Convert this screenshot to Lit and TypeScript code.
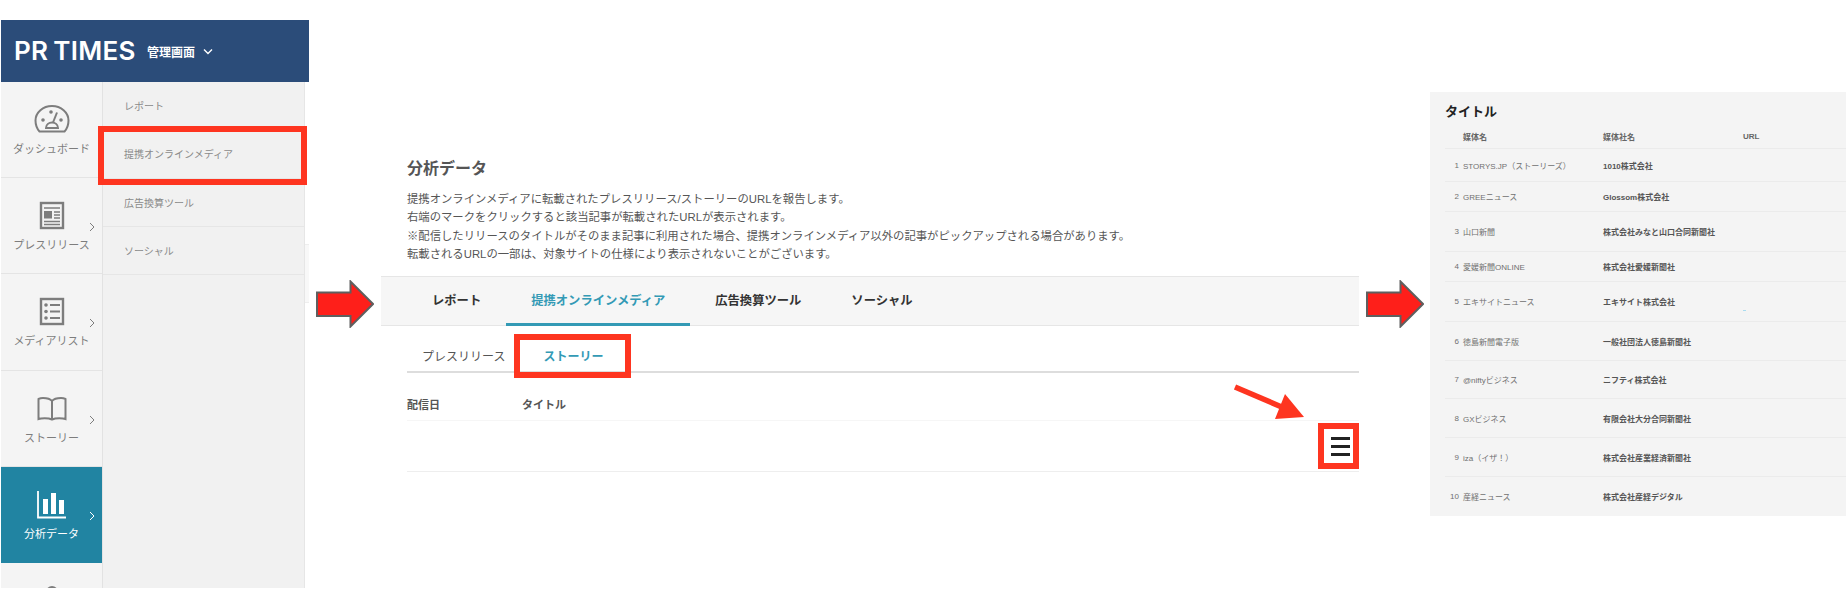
import { LitElement, html, css, svg } from "lit";
import { customElement } from "lit/decorators.js";

const ICONS = {
  gauge: svg`<path d="M5.5 27.5C2.8 24.5 1.5 20.500 1.500 16.500C1.500 8.500 9 2 18 2S34.500 8.500 34.500 16.500C34.500 20.500 33.200 24.500 30.500 27.500Z" fill="none" stroke="currentColor" stroke-width="2"/>
    <circle cx="9" cy="16" r="1.800" fill="currentColor"/><circle cx="27" cy="16" r="1.800" fill="currentColor"/><circle cx="17" cy="8" r="1.800" fill="currentColor"/>
    <path d="M23 8.500L19 18.500" stroke="currentColor" stroke-width="2"/>
    <path d="M12 24C12 20.500 15 18.500 18 18.500S24 20.500 24 24Z" fill="none" stroke="currentColor" stroke-width="2"/>`,
  news: svg`<rect x="7" y="3" width="22" height="25" fill="none" stroke="currentColor" stroke-width="2.400"/>
    <path d="M10 8H26M20 12H26M20 15H26M20 18H26M10 21.500H26M10 24.500H26" stroke="currentColor" stroke-width="1.600"/>
    <rect x="10" y="11" width="8" height="7.500" fill="currentColor"/>`,
  list: svg`<rect x="7" y="3" width="22" height="25" fill="none" stroke="currentColor" stroke-width="2.400"/>
    <circle cx="12" cy="9" r="1.800" fill="currentColor"/><circle cx="12" cy="15.500" r="1.800" fill="currentColor"/><circle cx="12" cy="22" r="1.800" fill="currentColor"/>
    <path d="M16 9H26M16 15.500H26M16 22H26" stroke="currentColor" stroke-width="1.800"/>`,
  book: svg`<path d="M18 8C16 5.500 12 5 9 5C7 5 5.500 5.500 4.500 6V26C7 25 14 24.500 18 26.500C22 24.500 29 25 31.500 26V6C30.500 5.500 29 5 27 5C24 5 20 5.500 18 8ZM18 8V26" fill="none" stroke="currentColor" stroke-width="2"/>`,
  bars: svg`<path d="M4 2V28.500H32" fill="none" stroke="currentColor" stroke-width="1.800"/>
    <rect x="9" y="10" width="5" height="15" fill="currentColor"/><rect x="17" y="4" width="5" height="21" fill="currentColor"/><rect x="25" y="11" width="5" height="14" fill="currentColor"/>`,
  user: svg`<circle cx="18" cy="7" r="5" fill="none" stroke="currentColor" stroke-width="2"/>`,
};

const NAV = [
  { label: "ダッシュボード", icon: ICONS.gauge },
  { label: "プレスリリース", icon: ICONS.news, arrow: true },
  { label: "メディアリスト", icon: ICONS.list, arrow: true },
  { label: "ストーリー", icon: ICONS.book, arrow: true },
  { label: "分析データ", icon: ICONS.bars, arrow: true, active: true },
  { label: "", icon: ICONS.user },
];

const MEDIA = [
  ["1", "STORYS.JP（ストーリーズ）", "1010株式会社", 33],
  ["2", "GREEニュース", "Glossom株式会社", 30],
  ["3", "山口新聞", "株式会社みなと山口合同新聞社", 40],
  ["4", "愛媛新聞ONLINE", "株式会社愛媛新聞社", 30],
  ["5", "エキサイトニュース", "エキサイト株式会社", 40],
  ["6", "徳島新聞電子版", "一般社団法人徳島新聞社", 39],
  ["7", "@niftyビジネス", "ニフティ株式会社", 38],
  ["8", "GXビジネス", "有限会社大分合同新聞社", 39],
  ["9", "iza（イザ！）", "株式会社産業経済新聞社", 39],
  ["10", "産経ニュース", "株式会社産経デジタル", 39],
];

@customElement("app-root")
export class AppRoot extends LitElement {
  static styles = css`
    :host {
      display: block;
      width: 1846px;
      height: 612px;
      overflow: hidden;
      background: #fff;
      font-family: "Liberation Sans", "Noto Sans CJK JP", sans-serif;
    }
    .page {
      display: flex;
      align-items: flex-start;
    }

    /* sidebar */
    .sidebar {
      flex: none;
      width: 308px;
      margin: 20px 0 0 1px;
    }
    .head {
      height: 62px;
      background: #2b4c79;
      color: #fff;
      display: flex;
      align-items: center;
      padding-left: 13px;
      box-sizing: border-box;
    }
    .logo {
      width: 133px;
      font-family: Inter, sans-serif;
      font-size: 26px;
      font-weight: 600;
      letter-spacing: 0.3px;
      word-spacing: -2px;
      line-height: 1;
      white-space: nowrap;
    }
    .head-label {
      font-size: 12px;
      font-weight: 700;
    }
    .head svg {
      margin-left: 8px;
    }
    .lower {
      display: flex;
    }
    .body {
      flex: none;
      display: flex;
      height: 506px;
      width: 303px;
      border-right: 1px solid #e6e6e6;
      background: #f1f1f1;
    }
    .peek {
      flex: 1;
      height: 57px;
      margin-top: 162px;
      background: #f8f8f8;
      border-top: 1px solid #eee;
      border-bottom: 1px solid #eee;
    }
    .nav {
      flex: none;
      width: 101px;
      height: 506px;
      overflow: hidden;
      border-right: 1px solid #e2e2e2;
      background: #f4f4f4;
    }
    .nav-item {
      position: relative;
      height: 96.200px;
      box-sizing: border-box;
      padding-top: 22px;
      display: flex;
      flex-direction: column;
      align-items: center;
      border-bottom: 1px solid #e4e4e4;
      color: #7d7d7d;
      font-size: 11px;
    }
    .nav-item.active {
      background: #2184a2;
      color: #fff;
      border-bottom-color: #2184a2;
    }
    .nav-item svg.icon {
      display: block;
    }
    .nav-label {
      margin-top: 8px;
      line-height: 14px;
    }
    .nav-chevron {
      position: absolute;
      left: 88px;
      top: 44px;
    }
    .sub {
      flex: 1;
    }
    .sub-item {
      position: relative;
      height: 48.300px;
      box-sizing: border-box;
      display: flex;
      align-items: center;
      padding-left: 21px;
      border-bottom: 1px solid #e6e6e6;
      color: #8a8a8a;
      font-size: 10px;
    }
    .sub-mark {
      position: absolute;
      left: -5px;
      right: -3px;
      top: -4px;
      bottom: -7px;
      border: 6px solid #fe3520;
    }

    /* big arrows between the captures */
    .step {
      flex: none;
      display: block;
      margin-top: 280px;
    }
    .step.first {
      margin-left: 7px;
    }
    .step.second {
      margin-left: 7px;
    }

    /* middle capture */
    .main {
      position: relative;
      flex: none;
      width: 978px;
      margin: 158px 0 0 7px;
    }
    .main h1 {
      margin: 0 0 10px 26px;
      font-size: 16px;
      line-height: 22px;
      font-weight: 700;
      color: #555;
    }
    .lead {
      margin: 0 0 13px 26px;
      font-size: 11.350px;
      line-height: 18.300px;
      color: #555;
    }
    .tabs {
      display: flex;
      height: 50px;
      box-sizing: border-box;
      padding-left: 26px;
      background: #f6f6f6;
      border-top: 1px solid #e6e6e6;
      border-bottom: 1px solid #e6e6e6;
    }
    .tab {
      padding: 0 25px;
      line-height: 48px;
      font-size: 12.300px;
      font-weight: 700;
      color: #333;
    }
    .tab.on {
      color: #339ab5;
      height: 46px;
      border-bottom: 3px solid #339ab5;
    }
    .subtabs {
      display: flex;
      gap: 8px;
      height: 47px;
      box-sizing: border-box;
      margin-left: 26px;
      border-bottom: 2px solid #ddd;
    }
    .subtab {
      position: relative;
      padding: 0 15px;
      line-height: 62px;
      height: 45px;
      font-size: 12px;
      color: #555;
    }
    .subtab.on {
      color: #339ab5;
      font-weight: 700;
    }
    .subtab-mark {
      position: absolute;
      left: -14px;
      right: -13px;
      top: 8px;
      bottom: -7px;
      border: 6px solid #fe3520;
    }
    .thead {
      display: grid;
      grid-template-columns: 115px 1fr;
      align-items: center;
      height: 48px;
      box-sizing: border-box;
      padding-top: 14px;
      margin-left: 26px;
      border-bottom: 1px solid #f6f6f6;
      font-size: 11px;
      font-weight: 700;
      color: #555;
    }
    .trow {
      display: flex;
      justify-content: flex-end;
      height: 51px;
      box-sizing: border-box;
      margin-left: 26px;
      padding-top: 2px;
      border-bottom: 1px solid #eee;
    }
    .menu {
      width: 41px;
      height: 46px;
      box-sizing: border-box;
      border: 6px solid #fe3520;
      padding-left: 4px;
      display: flex;
      flex-direction: column;
      align-items: center;
      justify-content: center;
      gap: 5px;
    }
    .menu span {
      width: 19px;
      height: 3px;
      background: #222;
    }
    .pointer {
      position: absolute;
      left: 849px;
      top: 222px;
    }

    /* right capture */
    .panel {
      flex: 1;
      height: 424px;
      margin: 92px 0 0 6px;
      box-sizing: border-box;
      padding: 10px 0 0 15px;
      background: #f4f4f4;
    }
    .panel h2 {
      margin: 0;
      font-size: 13px;
      line-height: 20px;
      font-weight: 700;
      color: #222;
    }
    .mrow {
      display: grid;
      grid-template-columns: 18px 140px 140px 1fr;
      align-items: center;
      box-sizing: border-box;
      border-bottom: 1px solid #ebebeb;
      font-size: 8px;
      color: #707070;
    }
    .mrow:last-child {
      border-bottom: 0;
    }
    .mrow.top {
      height: 27px;
      padding-top: 3px;
      font-weight: 700;
      color: #666;
    }
    .num {
      text-align: right;
      padding-right: 4px;
    }
    .company {
      font-weight: 700;
      color: #555;
    }
    .speck {
      align-self: end;
      width: 3px;
      height: 1px;
      margin-bottom: 10px;
      background: #a9dcf0;
    }
  `;

  arrow(cls: string) {
    return html`<svg class="step ${cls}" width="58" height="48" viewBox="0 0 58 48">
      <path d="M1 12.500H34.500V1.500L57 24L34.500 46.500V36H1Z" fill="#fe1f1a" stroke="#5f5f5f" stroke-width="2"/>
    </svg>`;
  }

  render() {
    return html`
      <div class="page">
        <div class="sidebar">
          <div class="head">
            <span class="logo">PR TIMES</span>
            <span class="head-label">管理画面</span>
            <svg width="10" height="7" viewBox="0 0 10 7"><path d="M1 1.500L5 5.500L9 1.500" fill="none" stroke="#fff" stroke-width="1.400"/></svg>
          </div>
          <div class="lower">
            <div class="body">
              <div class="nav">
                ${NAV.map(n => html`
                  <div class="nav-item ${n.active ? "active" : ""}">
                    <svg class="icon" width="36" height="30" viewBox="0 0 36 30">${n.icon}</svg>
                    <span class="nav-label">${n.label}</span>
                    ${n.arrow ? html`<svg class="nav-chevron" width="6" height="10" viewBox="0 0 6 10"><path d="M1 1L5 5L1 9" fill="none" stroke="currentColor" stroke-width="1"/></svg>` : ""}
                  </div>`)}
              </div>
              <div class="sub">
                <div class="sub-item">レポート</div>
                <div class="sub-item">提携オンラインメディア<span class="sub-mark"></span></div>
                <div class="sub-item">広告換算ツール</div>
                <div class="sub-item">ソーシャル</div>
              </div>
            </div>
            <div class="peek"></div>
          </div>
        </div>

        ${this.arrow("first")}

        <div class="main">
          <h1>分析データ</h1>
          <p class="lead">
            提携オンラインメディアに転載されたプレスリリース/ストーリーのURLを報告します。<br>
            右端のマークをクリックすると該当記事が転載されたURLが表示されます。<br>
            ※配信したリリースのタイトルがそのまま記事に利用された場合、提携オンラインメディア以外の記事がピックアップされる場合があります。<br>
            転載されるURLの一部は、対象サイトの仕様により表示されないことがございます。
          </p>
          <div class="tabs">
            <div class="tab">レポート</div>
            <div class="tab on">提携オンラインメディア</div>
            <div class="tab">広告換算ツール</div>
            <div class="tab">ソーシャル</div>
          </div>
          <div class="subtabs">
            <div class="subtab">プレスリリース</div>
            <div class="subtab on">ストーリー<span class="subtab-mark"></span></div>
          </div>
          <div class="thead"><span>配信日</span><span>タイトル</span></div>
          <div class="trow">
            <div class="menu"><span></span><span></span><span></span></div>
          </div>
          <svg class="pointer" width="80" height="45" viewBox="1230 380 80 45">
            <path d="M1235 387L1284 408" stroke="#fe3520" stroke-width="5.500"/>
            <path d="M1285 394L1304 417L1275 419Z" fill="#fe3520"/>
          </svg>
        </div>

        ${this.arrow("second")}

        <div class="panel">
          <h2>タイトル</h2>
          <div class="mrow top"><span></span><span>媒体名</span><span>媒体社名</span><span>URL</span></div>
          ${MEDIA.map(m => html`
            <div class="mrow" style="height:${m[3]}px">
              <span class="num">${m[0]}</span><span>${m[1]}</span><span class="company">${m[2]}</span>${m[0] === "5" ? html`<span class="speck"></span>` : html`<span></span>`}
            </div>`)}
        </div>
      </div>
    `;
  }
}
